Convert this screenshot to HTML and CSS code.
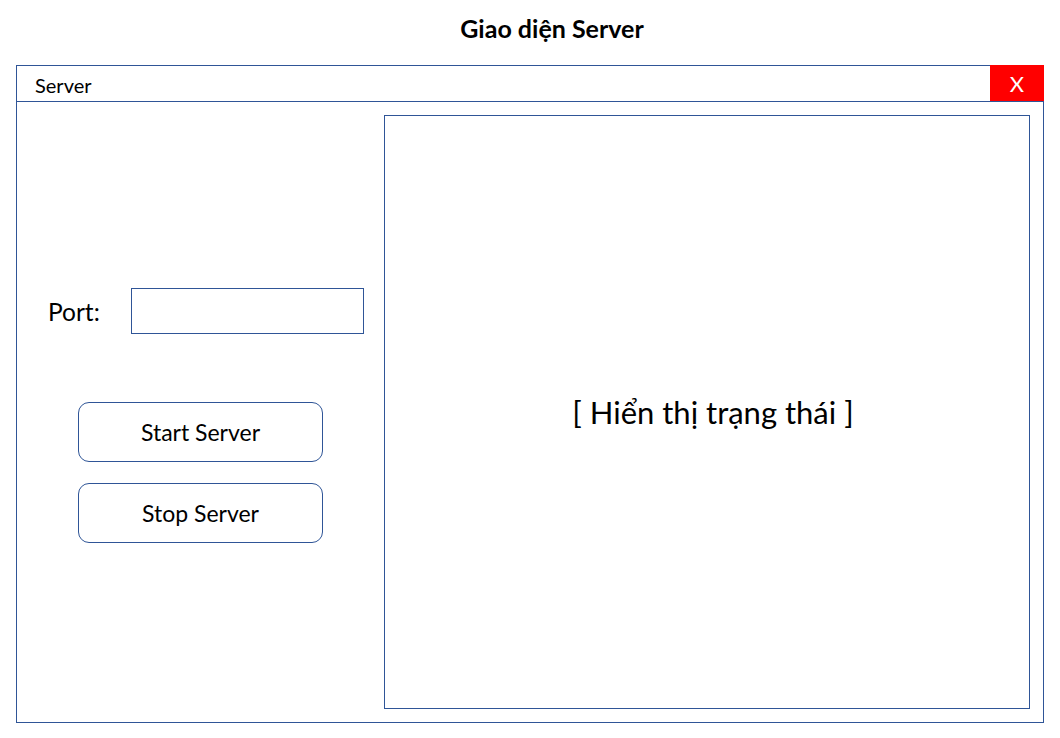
FILE: index.html
```html
<!DOCTYPE html>
<html lang="vi">
<head>
<meta charset="utf-8">
<title>Giao diện Server</title>
<link rel="stylesheet" href="styles.css">
</head>
<body>
<h1 class="page-title">Giao diện Server</h1>
<div class="window">
  <div class="titlebar">
    <span class="titlebar-text">Server</span>
    <div class="close-btn">X</div>
  </div>
  <div class="win-body">
    <div class="left-col">
      <div class="port-row">
        <label class="port-label">Port:</label>
        <div class="port-input"></div>
      </div>
      <div class="buttons">
        <div class="btn">Start Server</div>
        <div class="btn">Stop Server</div>
      </div>
    </div>
    <div class="status-panel">
      <span class="status-text">[ Hiển thị trạng thái ]</span>
    </div>
  </div>
</div>
</body>
</html>
```
FILE: styles.css
```css
html, body {
  margin: 0;
  padding: 0;
  background: #ffffff;
}
body {
  font-family: Lato, "Open Sans", "Liberation Sans", sans-serif;
  color: #000;
  width: 1060px;
  height: 738px;
  overflow: hidden;
}
.page-title {
  margin: 0;
  height: 65px;
  box-sizing: border-box;
  padding: 13px 0 0 44px;
  text-align: center;
  font-size: 25px;
  font-weight: 700;
  line-height: 30px;
}
.window {
  margin-left: 16px;
  width: 1028px;
  height: 658px;
  box-sizing: border-box;
  border: 1px solid #2f5597;
  display: flex;
  flex-direction: column;
}
.titlebar {
  height: 36px;
  box-sizing: border-box;
  border-bottom: 1px solid #2f5597;
  display: flex;
  align-items: center;
  justify-content: space-between;
}
.titlebar-text {
  padding-left: 18px;
  font-size: 20px;
  padding-top: 3px;
}
.close-btn {
  align-self: flex-start;
  margin-top: -1px;
  margin-right: -1px;
  width: 54px;
  height: 36px;
  background: #ff0000;
  color: #fff;
  font-size: 22px;
  display: flex;
  align-items: center;
  justify-content: center;
  padding-top: 1px;
  box-sizing: border-box;
}
.win-body {
  flex: 1;
  display: flex;
  padding: 13px 13px 13px 0;
}
.left-col {
  width: 367px;
  flex-shrink: 0;
  padding-top: 173px;
  box-sizing: border-box;
}
.port-row {
  display: flex;
  align-items: center;
  padding-left: 31px;
}
.port-label {
  width: 83px;
  font-size: 24.5px;
  padding-top: 1px;
}
.port-input {
  width: 233px;
  height: 46px;
  box-sizing: border-box;
  border: 1px solid #2f5597;
}
.buttons {
  margin-top: 68px;
  padding-left: 61px;
  display: flex;
  flex-direction: column;
  gap: 21px;
}
.btn {
  width: 245px;
  height: 60px;
  box-sizing: border-box;
  border: 1px solid #2f5597;
  border-radius: 11px;
  display: flex;
  align-items: center;
  justify-content: center;
  font-size: 23px;
  padding-bottom: 1px;
}
.status-panel {
  flex: 1;
  border: 1px solid #2f5597;
  display: flex;
  align-items: center;
  justify-content: center;
  padding-left: 12px;
}
.status-text {
  font-size: 31px;
}
```
